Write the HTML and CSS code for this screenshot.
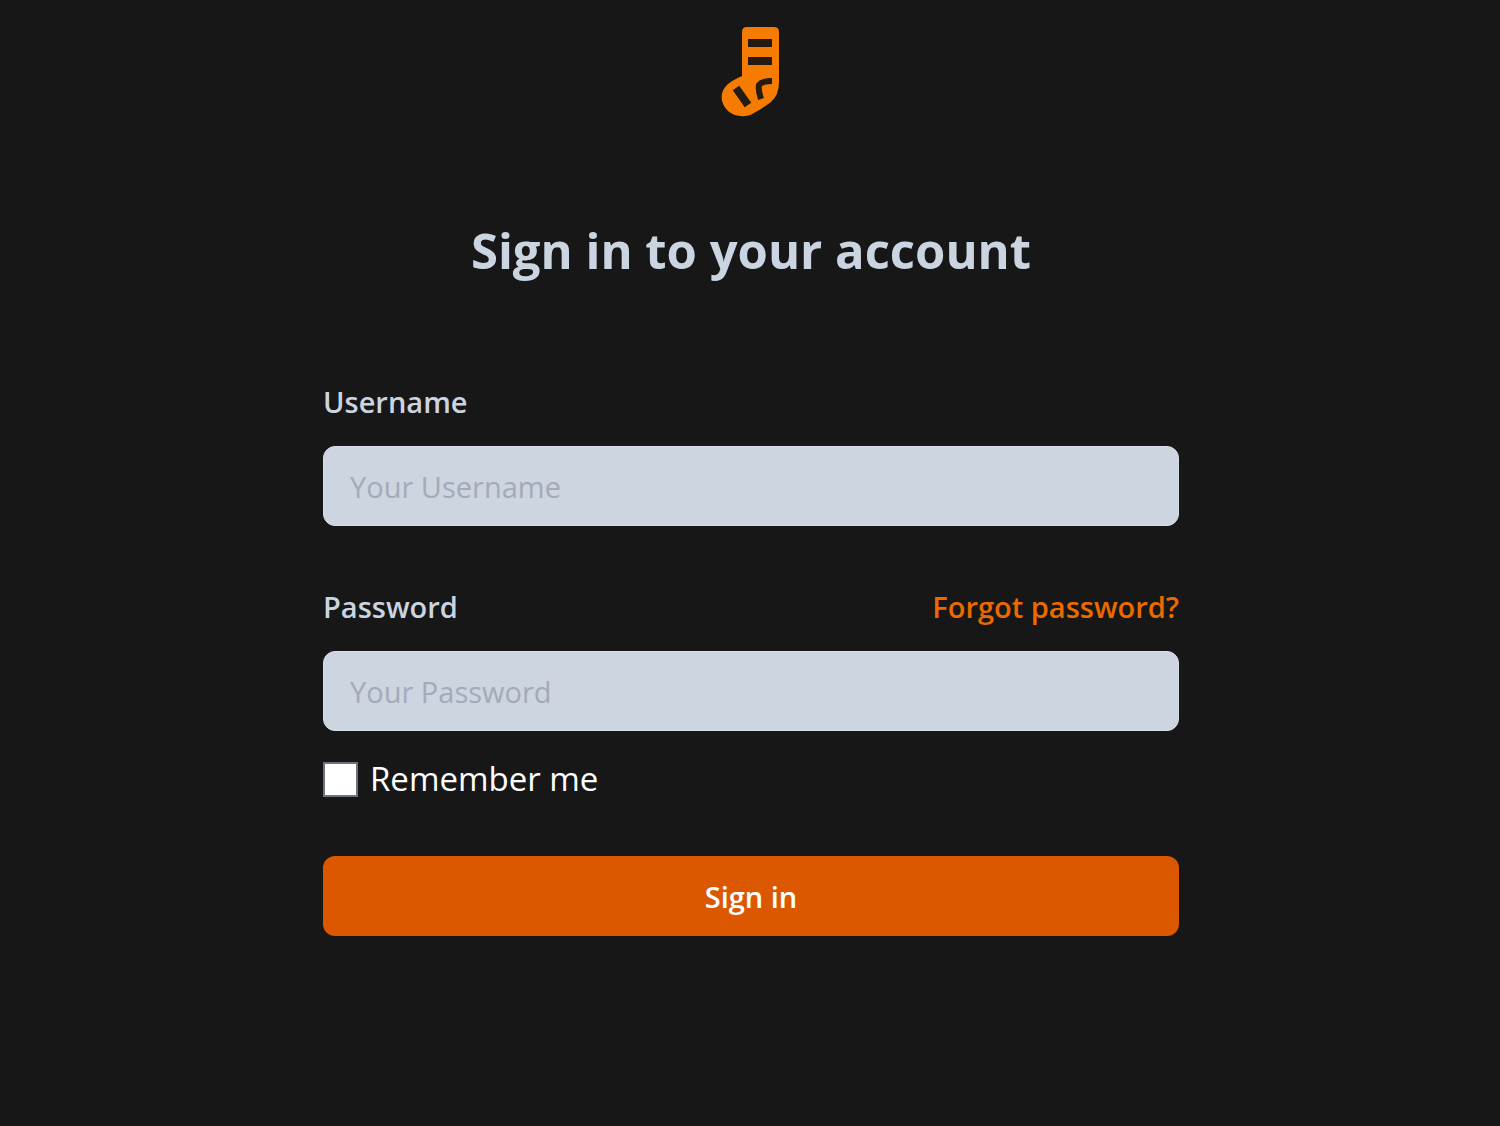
FILE: index.html
```html
<!DOCTYPE html>
<html lang="en">
<head>
<meta charset="utf-8">
<meta name="viewport" content="width=device-width, initial-scale=1">
<title>Sign in to your account</title>
<link rel="stylesheet" href="styles.css">
</head>
<body>
<main class="page">
  <svg class="logo" viewBox="0 0 60 92" role="img" aria-label="Sock logo">
    <path class="logo-sock" d="M26 1H53Q58 1 58 6V56Q58 69 50 76Q42 82 33 87C25 92 14 91 7 85C-2 76-1 65 7 58Q12 54 21 50V6Q21 1 26 1Z"/>
    <path class="logo-stripe" d="M27 17H51M27 35H51M15 62L27 79"/>
    <path class="logo-heel" d="M51 55Q41 55 38 59Q37 64 40 73"/>
  </svg>
  <h1 class="title">Sign in to your account</h1>
  <form class="form">
    <div class="field">
      <label class="label" for="username">Username</label>
      <input class="input" id="username" type="text" placeholder="Your Username">
    </div>
    <div class="field">
      <div class="label-row">
        <label class="label" for="password">Password</label>
        <a class="forgot" href="#">Forgot password?</a>
      </div>
      <input class="input" id="password" type="password" placeholder="Your Password">
    </div>
    <div class="remember">
      <input class="checkbox" id="remember" type="checkbox">
      <label for="remember">Remember me</label>
    </div>
    <button class="submit" type="submit">Sign in</button>
  </form>
</main>
</body>
</html>
```
FILE: styles.css
```css
*, *::before, *::after {
  box-sizing: border-box;
}

body {
  margin: 0;
  background: #171717;
  color: #fff;
  font-family: "Segoe UI", "Open Sans", "Noto Sans", sans-serif;
}

.page {
  display: flex;
  flex-direction: column;
  align-items: center;
  padding: 26px 24px 48px 26px;
}

.logo {
  width: 60px;
  height: 92px;
}

.logo-sock {
  fill: #f57c00;
}

.logo-stripe,
.logo-heel {
  fill: none;
  stroke: #251b12;
  stroke-width: 8;
}

.logo-heel {
  stroke-width: 6;
}

.title {
  margin: 92px 0 0;
  color: #cbd5e1;
  font-size: 49px;
  font-weight: 700;
  line-height: 80px;
  text-align: center;
}

.form {
  display: flex;
  flex-direction: column;
  width: 100%;
  max-width: 856px;
  margin-top: 88px;
}

.field {
  display: flex;
  flex-direction: column;
  gap: 20px;
  margin-bottom: 57px;
}

.field:nth-child(2) {
  margin-bottom: 24px;
}

.label-row {
  display: flex;
  justify-content: space-between;
}

.label,
.forgot {
  font-size: 29px;
  font-weight: 600;
  line-height: 48px;
}

.label {
  color: #cbd5e1;
}

.forgot {
  color: #ea6a00;
  text-decoration: none;
}

.input {
  width: 100%;
  height: 80px;
  padding: 0 26px;
  border: 1px solid #d8dde8;
  border-radius: 12px;
  background: #cdd5e1;
  color: #171717;
  font: inherit;
  font-size: 29px;
}

.input::placeholder {
  color: #a3abb8;
  opacity: 1;
}

.remember {
  display: flex;
  align-items: center;
  gap: 12px;
  font-size: 33px;
  line-height: 48px;
}

.checkbox {
  appearance: none;
  width: 35px;
  height: 35px;
  margin: 0;
  border: 2px solid #6b7280;
  background: #fff;
}

.checkbox:checked {
  background: #db5800;
}

.submit {
  height: 80px;
  margin-top: 53px;
  border: 0;
  border-radius: 12px;
  background: #db5800;
  color: #fff;
  font: inherit;
  font-size: 29px;
  font-weight: 600;
  cursor: pointer;
}
```
